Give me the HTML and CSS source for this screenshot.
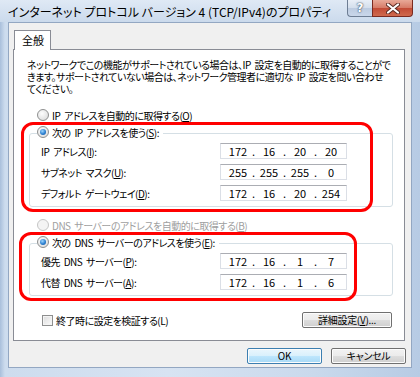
FILE: index.html
```html
<!DOCTYPE html>
<html lang="ja">

<head>
    <meta charset="UTF-8">
    <title>インターネット プロトコル バージョン 4 (TCP/IPv4)のプロパティ</title>
    <link rel="stylesheet" href="styles.css">
</head>

<body>
    <div class="window">
        <div class="titlebar">
            <span class="title">インターネット プロトコル バージョン 4 (TCP/IPv4)のプロパティ</span>
            <div class="caps">
                <span class="cap help">?</span>
                <span class="cap close">
                    <svg width="14" height="11" viewBox="0 0 14 11">
                        <path d="M2 1.5 L12 9.5 M12 1.5 L2 9.5" stroke="#5a2a22" stroke-width="4" stroke-linecap="round" />
                        <path d="M2 1.5 L12 9.5 M12 1.5 L2 9.5" stroke="#fff" stroke-width="2.2" stroke-linecap="round" />
                    </svg>
                </span>
            </div>
        </div>

        <div class="client">
            <div class="tabs">
                <span class="tab">全般</span>
            </div>
            <div class="panel">
                <p class="intro">ネットワークでこの機能がサポートされている場合は、IP 設定を自動的に取得することがで<br>きます。サポートされていない場合は、ネットワーク管理者に適切な IP 設定を問い合わせ<br>てください。</p>

                <div class="option first">
                    <span class="radio"></span>
                    <span>IP アドレスを自動的に取得する(<u>O</u>)</span>
                </div>

                <div class="group">
                    <div class="group-head">
                        <span class="radio checked"></span>
                        <span>次の IP アドレスを使う(<u>S</u>):</span>
                    </div>
                    <div class="row">
                        <span>IP アドレス(<u>I</u>):</span>
                        <div class="ip"><span>172</span><i>.</i><span>16</span><i>.</i><span>20</span><i>.</i><span>20</span></div>
                    </div>
                    <div class="row">
                        <span>サブネット マスク(<u>U</u>):</span>
                        <div class="ip"><span>255</span><i>.</i><span>255</span><i>.</i><span>255</span><i>.</i><span>0</span></div>
                    </div>
                    <div class="row">
                        <span>デフォルト ゲートウェイ(<u>D</u>):</span>
                        <div class="ip"><span>172</span><i>.</i><span>16</span><i>.</i><span>20</span><i>.</i><span>254</span></div>
                    </div>
                </div>

                <div class="option disabled">
                    <span class="radio"></span>
                    <span>DNS サーバーのアドレスを自動的に取得する(<u>B</u>)</span>
                </div>

                <div class="group">
                    <div class="group-head">
                        <span class="radio checked"></span>
                        <span>次の DNS サーバーのアドレスを使う(<u>E</u>):</span>
                    </div>
                    <div class="row">
                        <span>優先 DNS サーバー(<u>P</u>):</span>
                        <div class="ip"><span>172</span><i>.</i><span>16</span><i>.</i><span>1</span><i>.</i><span>7</span></div>
                    </div>
                    <div class="row">
                        <span>代替 DNS サーバー(<u>A</u>):</span>
                        <div class="ip"><span>172</span><i>.</i><span>16</span><i>.</i><span>1</span><i>.</i><span>6</span></div>
                    </div>
                </div>

                <div class="panel-foot">
                    <div class="check-line">
                        <span class="checkbox"></span>
                        <span>終了時に設定を検証する(L)</span>
                    </div>
                    <button class="btn wide">詳細設定(<u>V</u>)...</button>
                </div>

                <div class="mark mark-ip"></div>
                <div class="mark mark-dns"></div>
            </div>

            <div class="actions">
                <button class="btn default">OK</button>
                <button class="btn">キャンセル</button>
            </div>
        </div>
    </div>
</body>

</html>
```

FILE: styles.css
```css
/* dialog styles */
body {
    margin: 0;
    width: 420px;
    height: 377px;
    overflow: hidden;
    font-family: "Noto Sans CJK JP", "Noto Sans", sans-serif;
    font-size: 10px;
    letter-spacing: -0.5px;
    word-spacing: 2px;
    font-feature-settings: "palt";
    color: #000;
}

u {
    text-decoration: underline;
    text-underline-offset: 1px;
}

.window {
    height: 377px;
    display: flex;
    flex-direction: column;
    background: linear-gradient(to right, #a9bfdb 0, #cddcee 5px, #d7e3f2 40%, #c9d9ec 75%, #b7cbe4 100%);
}

.titlebar {
    height: 22px;
    display: flex;
    align-items: flex-start;
    padding: 0 7px 0 8px;
    background: linear-gradient(to bottom, #dfe9f5, #cbdaec);
}

.title {
    flex: 1;
    font-size: 12px;
    letter-spacing: 0;
    word-spacing: 0;
    line-height: 24px;
    white-space: nowrap;
}

.caps {
    display: flex;
}

.cap {
    height: 17px;
    display: flex;
    align-items: center;
    justify-content: center;
    border: 1px solid #6d7d93;
    border-top: none;
    box-sizing: border-box;
}

.help {
    width: 25px;
    border-radius: 0 0 0 4px;
    border-right: none;
    background: linear-gradient(to bottom, #e9eff7, #d3deec 50%, #bccbe0 51%, #c9d7ea);
    color: #fff;
    font-family: "DejaVu Sans", sans-serif;
    font-weight: bold;
    font-size: 12px;
    letter-spacing: 0;
    text-shadow: 0 0 2px #35475e, 0 0 1px #35475e;
}

.close {
    width: 41px;
    border-color: #7a2a20;
    border-radius: 0 0 4px 0;
    background: linear-gradient(to bottom, #e8a998, #d67a66 50%, #c24a35 51%, #cf6a4e);
}

.client {
    height: 346px;
    margin: 0 8px;
    box-sizing: border-box;
    border: 1px solid #93a7c2;
    background: #f0f0f0;
}

.tabs {
    display: flex;
    padding: 7px 0 0 5px;
}

.tab {
    position: relative;
    z-index: 1;
    height: 20px;
    box-sizing: border-box;
    margin-bottom: -1px;
    padding: 0 6px 0 7px;
    line-height: 19px;
    font-size: 11px;
    letter-spacing: 0;
    background: #fff;
    border: 1px solid #898c95;
    border-bottom: none;
}

.panel {
    position: relative;
    width: 392px;
    height: 292px;
    box-sizing: border-box;
    margin-left: 4px;
    border: 1px solid #898c95;
    background: #fff;
}

.intro {
    margin: 9px 0 0 13px;
    line-height: 12px;
    white-space: nowrap;
}

.option {
    display: flex;
    align-items: center;
    gap: 3px;
    height: 14px;
    margin: 11px 0 0 23px;
}

.option.first {
    margin-top: 13px;
}

.option.disabled {
    color: #a0a0a0;
}

.radio {
    width: 10px;
    height: 10px;
    border-radius: 50%;
    border: 1px solid #8e8f8f;
    background: radial-gradient(circle at 40% 35%, #fdfdfd, #e2e2e2 70%, #d4d4d4);
    flex: none;
    position: relative;
}

.disabled .radio {
    border-color: #c5c5c5;
    background: #f4f4f4;
}

.radio.checked::after {
    content: "";
    position: absolute;
    left: 2px;
    top: 2px;
    width: 6px;
    height: 6px;
    border-radius: 50%;
    background: radial-gradient(circle at 40% 35%, #9fd7ff, #2b7fd0 55%, #0b4f9a);
}

.group {
    width: 364px;
    box-sizing: border-box;
    margin: 11px 0 0 15px;
    padding-bottom: 5px;
    border: 1px solid #d5dfe5;
    border-radius: 3px;
}

.group-head {
    display: flex;
    align-items: center;
    gap: 3px;
    width: fit-content;
    height: 14px;
    margin: -9px 0 0 7px;
    padding-right: 4px;
    background: #fff;
}

.row {
    display: grid;
    grid-template-columns: 179px 127px;
    align-items: center;
    height: 16px;
    margin: 5px 0 0 11px;
}

.group-head + .row {
    margin-top: 4px;
}

.ip {
    height: 16px;
    box-sizing: border-box;
    display: grid;
    grid-template-columns: 28px 3px 28px 3px 28px 3px 28px;
    padding: 0 3px;
    align-items: center;
    border: 1px solid #dbdfe6;
    border-top-color: #abadb3;
    line-height: 14px;
    font-size: 11px;
    letter-spacing: 0;
}

.ip span {
    text-align: center;
}

.ip i {
    font-style: normal;
    text-align: center;
}

.panel-foot {
    display: flex;
    align-items: center;
    justify-content: space-between;
    margin: 16px 12px 0 28px;
}

.check-line {
    display: flex;
    align-items: center;
    gap: 3px;
}

.checkbox {
    width: 9px;
    height: 9px;
    border: 1px solid #8e8f8f;
    background: linear-gradient(135deg, #dcdcdc, #fbfbfb);
    box-shadow: inset 0 0 0 1px #f4f4f4;
}

.btn {
    height: 16px;
    width: 75px;
    padding: 0;
    font-family: inherit;
    font-size: 10px;
    letter-spacing: -0.3px;
    font-feature-settings: "palt";
    line-height: 14px;
    color: #000;
    border: 1px solid #707070;
    border-radius: 2px;
    background: linear-gradient(to bottom, #f2f2f2, #ebebeb 50%, #dddddd 51%, #cfcfcf);
    box-shadow: inset 0 0 0 1px #fcfcfc;
}

.btn.wide {
    width: 90px;
}

.btn.default {
    border-color: #3c7fb1;
    background: linear-gradient(to bottom, #eaf6fd, #d9f0fc 50%, #bee6fd 51%, #a7d9f5);
}

.actions {
    display: flex;
    justify-content: flex-end;
    gap: 9px;
    padding: 7px 5px 0 0;
}

.mark {
    position: absolute;
    box-sizing: border-box;
    border: 3px solid #f00;
    border-radius: 12px;
}

.mark-ip {
    left: 7px;
    top: 72px;
    width: 352px;
    height: 90px;
}

.mark-dns {
    left: 5px;
    top: 182px;
    width: 338px;
    height: 69px;
}
```
